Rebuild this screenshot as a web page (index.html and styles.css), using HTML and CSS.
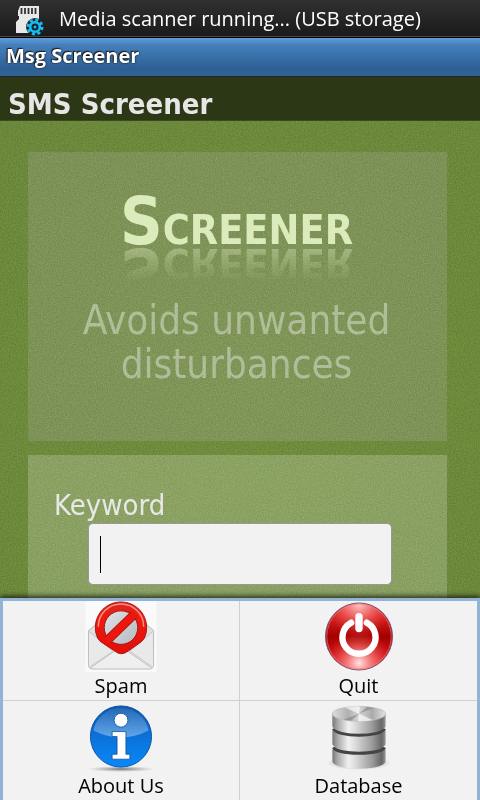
FILE: index.html
```html
<!DOCTYPE html>
<html lang="en">
<head>
<meta charset="utf-8">
<meta name="viewport" content="width=device-width, initial-scale=1">
<title>Msg Screener</title>
<link rel="stylesheet" href="styles.css">
</head>
<body>
<div class="phone">
  <div class="status">
    <svg class="status-icon" width="30" height="32" viewBox="0 0 30 32" aria-hidden="true">
      <path d="M5 1h19v27H1V17l3-3v-3H3V6z" fill="#e8e8e8"/>
      <path d="M6.500 3v6M10 3v6M13.500 3v6M17 3v6M20.500 3v6" stroke="#333" stroke-width="1.800"/>
      <circle cx="20" cy="22" r="9" fill="#1c2226"/>
      <circle cx="20" cy="22" r="7" fill="none" stroke="#14bdf5" stroke-width="3" stroke-dasharray="3 2.498"/>
      <circle cx="20" cy="22" r="4.800" fill="none" stroke="#14bdf5" stroke-width="2.600"/>
      <circle cx="20" cy="22" r="1.500" fill="#14bdf5"/>
    </svg>
    <span>Media scanner running... (USB storage)</span>
  </div>
  <div class="titlebar">Msg Screener</div>
  <header class="header"><h1>SMS Screener</h1></header>
  <main class="content">
    <svg class="grain" aria-hidden="true">
      <filter id="noise" x="0" y="0" width="100%" height="100%" color-interpolation-filters="sRGB">
        <feTurbulence type="fractalNoise" baseFrequency="0.850" numOctaves="2" seed="4"/>
        <feColorMatrix type="matrix" values="1 0 0 0 0  1 0 0 0 0  1 0 0 0 0  0 0 0 0 1"/>
      </filter>
      <rect width="100%" height="100%" filter="url(#noise)"/>
    </svg>
    <section class="panel hero">
      <h2 class="logo"><span class="initial">S</span>creener</h2>
      <p class="tagline">Avoids unwanted disturbances</p>
    </section>
    <form class="panel form">
      <label for="keyword">Keyword</label>
      <input id="keyword" type="text" autocomplete="off">
    </form>
  </main>
  <nav class="menu">
    <button type="button" class="item">
      <svg width="72" height="72" viewBox="0 0 72 72" aria-hidden="true">
        <defs>
          <linearGradient id="env" x2="0" y2="1"><stop stop-color="#ddd"/><stop offset="1" stop-color="#f2f2f2"/></linearGradient>
          <linearGradient id="ban" x2="0" y2="1"><stop stop-color="#d82a20"/><stop offset=".3" stop-color="#ed1c12"/><stop offset="1" stop-color="#e30d08"/></linearGradient>
          <linearGradient id="hole" x2="1" y2="1"><stop stop-color="#e0e3e6"/><stop offset="1" stop-color="#b4bac0"/></linearGradient>
        </defs>
        <rect width="72" height="72" fill="#fafafa"/>
        <path d="M3 30 13 22H60L69 30V65Q69 69 65 69H7Q3 69 3 65Z" fill="url(#env)" stroke="#bbb"/>
        <path d="M4 31 28 51 4 67M68 31 45 51 68 67" fill="#e9e9e9" stroke="#c4c4c4"/>
        <path d="M5 68 32 49Q36 46 40 49L67 68" fill="#efefef" stroke="#c2c2c2"/>
        <path d="M36 1C50 1 62 12 62 27Q62 36 57 41L43 51Q36 56 30 51L15 41Q10 36 10 27C10 12 22 1 36 1Z" fill="url(#ban)" stroke="#a91512"/>
        <path d="M13 26A23 23 0 0 1 59 26" fill="none" stroke="#ff9082" stroke-width="1.500"/>
        <circle cx="36" cy="27" r="17" fill="url(#hole)" stroke="#a01612"/>
        <path d="M23 39 49 14" stroke="#a01612" stroke-width="9"/>
        <path d="M21.500 40.500 50.500 12.500" stroke="#ee1710" stroke-width="7.500"/>
      </svg>
      <span>Spam</span>
    </button>
    <button type="button" class="item">
      <svg width="72" height="72" viewBox="0 0 72 72" aria-hidden="true">
        <defs>
          <linearGradient id="red" x2="0" y2="1"><stop stop-color="#e04040"/><stop offset=".25" stop-color="#cf1b1b"/><stop offset=".5" stop-color="#a30000"/><stop offset=".75" stop-color="#cc1111"/><stop offset="1" stop-color="#e33"/></linearGradient>
          <radialGradient id="top" cx=".5" cy="0" r=".5"><stop stop-color="#ffd0d0"/><stop offset="1" stop-color="#f44" stop-opacity="0"/></radialGradient>
          <radialGradient id="bottom" cx=".5" cy=".9" r=".5"><stop stop-color="#ffe4e4"/><stop offset="1" stop-color="#f44" stop-opacity="0"/></radialGradient>
        </defs>
        <circle cx="36" cy="36" r="34" fill="url(#red)" stroke="#6f5279"/>
        <circle cx="36" cy="36" r="33.500" fill="url(#top)"/>
        <circle cx="36" cy="36" r="33.500" fill="url(#bottom)"/>
        <circle cx="36" cy="36" r="32.700" fill="none" stroke="#f88080" stroke-opacity=".6"/>
        <path d="M28 22A16.800 16.800 0 1 0 44 22" fill="none" stroke="#fff" stroke-width="6.500" stroke-linecap="round"/>
        <path d="M36 16V28" stroke="#fff" stroke-width="7.500" stroke-linecap="round"/>
      </svg>
      <span>Quit</span>
    </button>
    <button type="button" class="item">
      <svg width="72" height="72" viewBox="0 0 72 72" aria-hidden="true">
        <defs>
          <linearGradient id="blue" x2="0" y2="1"><stop stop-color="#0a55a8"/><stop offset=".45" stop-color="#0b6fd6"/><stop offset="1" stop-color="#0889fa"/></linearGradient>
          <linearGradient id="shine" x2="0" y2="1"><stop stop-color="#fff" stop-opacity=".1"/><stop offset="1" stop-color="#fff" stop-opacity=".36"/></linearGradient>
          <radialGradient id="shade"><stop stop-color="#555" stop-opacity=".8"/><stop offset="1" stop-color="#888" stop-opacity="0"/></radialGradient>
        </defs>
        <ellipse cx="36" cy="69" rx="34" ry="3" fill="url(#shade)"/>
        <circle cx="36" cy="36" r="31" fill="url(#blue)" stroke="#0b55a4"/>
        <path d="M8 30A28.500 28.500 0 0 1 64 30Q50 37 36 37T8 30Z" fill="url(#shine)"/>
        <circle cx="36" cy="19.500" r="7" fill="#fff" stroke="#0b4f9a" stroke-width=".8"/>
        <path d="M27 31H41V54H45V59H27V54H32V36H27Z" fill="#fff" stroke="#0b4f9a" stroke-width=".8"/>
      </svg>
      <span>About Us</span>
    </button>
    <button type="button" class="item">
      <svg width="72" height="72" viewBox="0 0 72 72" aria-hidden="true">
        <defs>
          <linearGradient id="steel"><stop stop-color="#777"/><stop offset=".1" stop-color="#aaa"/><stop offset=".3" stop-color="#f0f0f0"/><stop offset=".42" stop-color="#ddd"/><stop offset=".75" stop-color="#9a9a9a"/><stop offset=".93" stop-color="#666"/><stop offset="1" stop-color="#999"/></linearGradient>
          <linearGradient id="lid"><stop stop-color="#ddd"/><stop offset=".3" stop-color="#b0b0b0"/><stop offset=".5" stop-color="#d8d8d8"/><stop offset=".75" stop-color="#aaa"/><stop offset="1" stop-color="#e4e4e4"/></linearGradient>
        </defs>
        <ellipse cx="36" cy="63" rx="33" ry="7" fill="url(#shade)"/>
        <path d="M9 50V61C9 71 63 71 63 61V50C63 41 9 41 9 50Z" fill="url(#steel)"/>
        <path d="M10 47C14 55 58 55 62 47" fill="none" stroke="#444" stroke-width="3"/>
        <path d="M9 31V43C9 53 63 53 63 43V31C63 23 9 23 9 31Z" fill="url(#steel)"/>
        <path d="M10 28C14 37 58 37 62 28" fill="none" stroke="#444" stroke-width="3"/>
        <path d="M9 13V25C9 35 63 35 63 25V13Z" fill="url(#steel)"/>
        <ellipse cx="36" cy="13" rx="27" ry="7.500" fill="url(#lid)" stroke="#bbb" stroke-width=".8"/>
        <path d="M36 13 22 6.800Q30 5 37 5.600ZM36 13 50 19.200Q43 21 35 20.500Z" fill="#fff" opacity=".65"/>
        <path d="M36 13 44 5.800 51 7ZM36 13 20 19 28 20Z" fill="#777" opacity=".5"/>
      </svg>
      <span>Database</span>
    </button>
  </nav>
</div>
</body>
</html>
```
FILE: styles.css
```css
* { box-sizing: border-box; }

body {
  margin: 0;
  font-family: "Open Sans", "Noto Sans", sans-serif;
}

.phone {
  position: relative;
  display: flex;
  flex-direction: column;
  height: 100vh;
  overflow: hidden;
}

.status {
  display: flex;
  align-items: center;
  gap: 14px;
  height: 38px;
  padding-left: 15px;
  background: linear-gradient(#303030, #1a1a1a);
  border-bottom: 1px solid #000;
  box-shadow: inset 0 -1px #484848;
  color: #fff;
  font-size: 20px;
  white-space: nowrap;
}

.status-icon { margin-top: 4px; }

.titlebar {
  height: 39px;
  padding-left: 6px;
  background: linear-gradient(#5f9edb, #4580bc 18%, #2c6095 80%, #336394);
  border-bottom: 1px solid #222;
  color: #fff;
  font-size: 20px;
  font-weight: 700;
  line-height: 36px;
  text-shadow: 0 0 2px #000, -1px -1px 1px #222;
}

.header {
  height: 44px;
  padding-left: 8px;
  background: #2c3715;
  border-bottom: 1px solid #3b491e;
}

h1, h2, p { margin: 0; }

h1, .content {
  font-family: "DejaVu Sans Condensed", "DejaVu Sans", sans-serif;
}

h1 {
  color: #e6e6e6;
  font-size: 29px;
  line-height: 54px;
}

.content {
  position: relative;
  flex: 1;
  padding: 31px 33px 0 28px;
  background: radial-gradient(circle at 50% 40%, #708c3c, #69863a);
}

.grain {
  position: absolute;
  inset: 0;
  width: 100%;
  height: 100%;
  opacity: 0.18;
  mix-blend-mode: overlay;
}

.panel { background: rgba(220, 200, 250, 0.15); }

.hero {
  height: 289px;
  padding: 38px 34px 0 32px;
  text-align: center;
}

.logo {
  color: #dcebbc;
  font-size: 41px;
  line-height: 64px;
  text-transform: uppercase;
  -webkit-box-reflect: below -31px linear-gradient(transparent 30%, rgba(255, 255, 255, 0.6));
}

.initial { font-size: 66px; }

.tagline {
  margin-top: 36px;
  color: #afbd98;
  font-size: 40px;
  line-height: 44px;
}

.form {
  margin-top: 14px;
  padding: 32px 55px 0 26px;
  height: 200px;
  background: rgba(255, 255, 255, 0.2);
}

.form label {
  display: block;
  color: #e8e8e8;
  font-size: 29px;
  line-height: 36px;
}

.form input {
  position: relative;
  display: block;
  width: calc(100% - 34px);
  height: 62px;
  margin-left: 34px;
  border: 1px solid #999;
  border-radius: 5px;
  padding: 10px 12px;
  background: linear-gradient(#000, #000) 11px center / 1px 37px no-repeat #f2f2f2;
  font-size: 24px;
}

.menu {
  position: absolute;
  inset: auto 0 0;
  display: grid;
  grid-template-columns: 236fr 237fr;
  gap: 1px;
  border: solid #91b3d6;
  border-width: 3px 3px 0;
  background: #d0d0d0;
  box-shadow: 0 -2px 5px rgba(0, 0, 0, 0.7);
}

.item {
  display: flex;
  flex-direction: column;
  align-items: center;
  height: 99px;
  padding: 0;
  border: 0;
  background: #f2f2f2;
  color: #000;
  font: inherit;
  font-size: 20px;
  line-height: 28px;
}
```
